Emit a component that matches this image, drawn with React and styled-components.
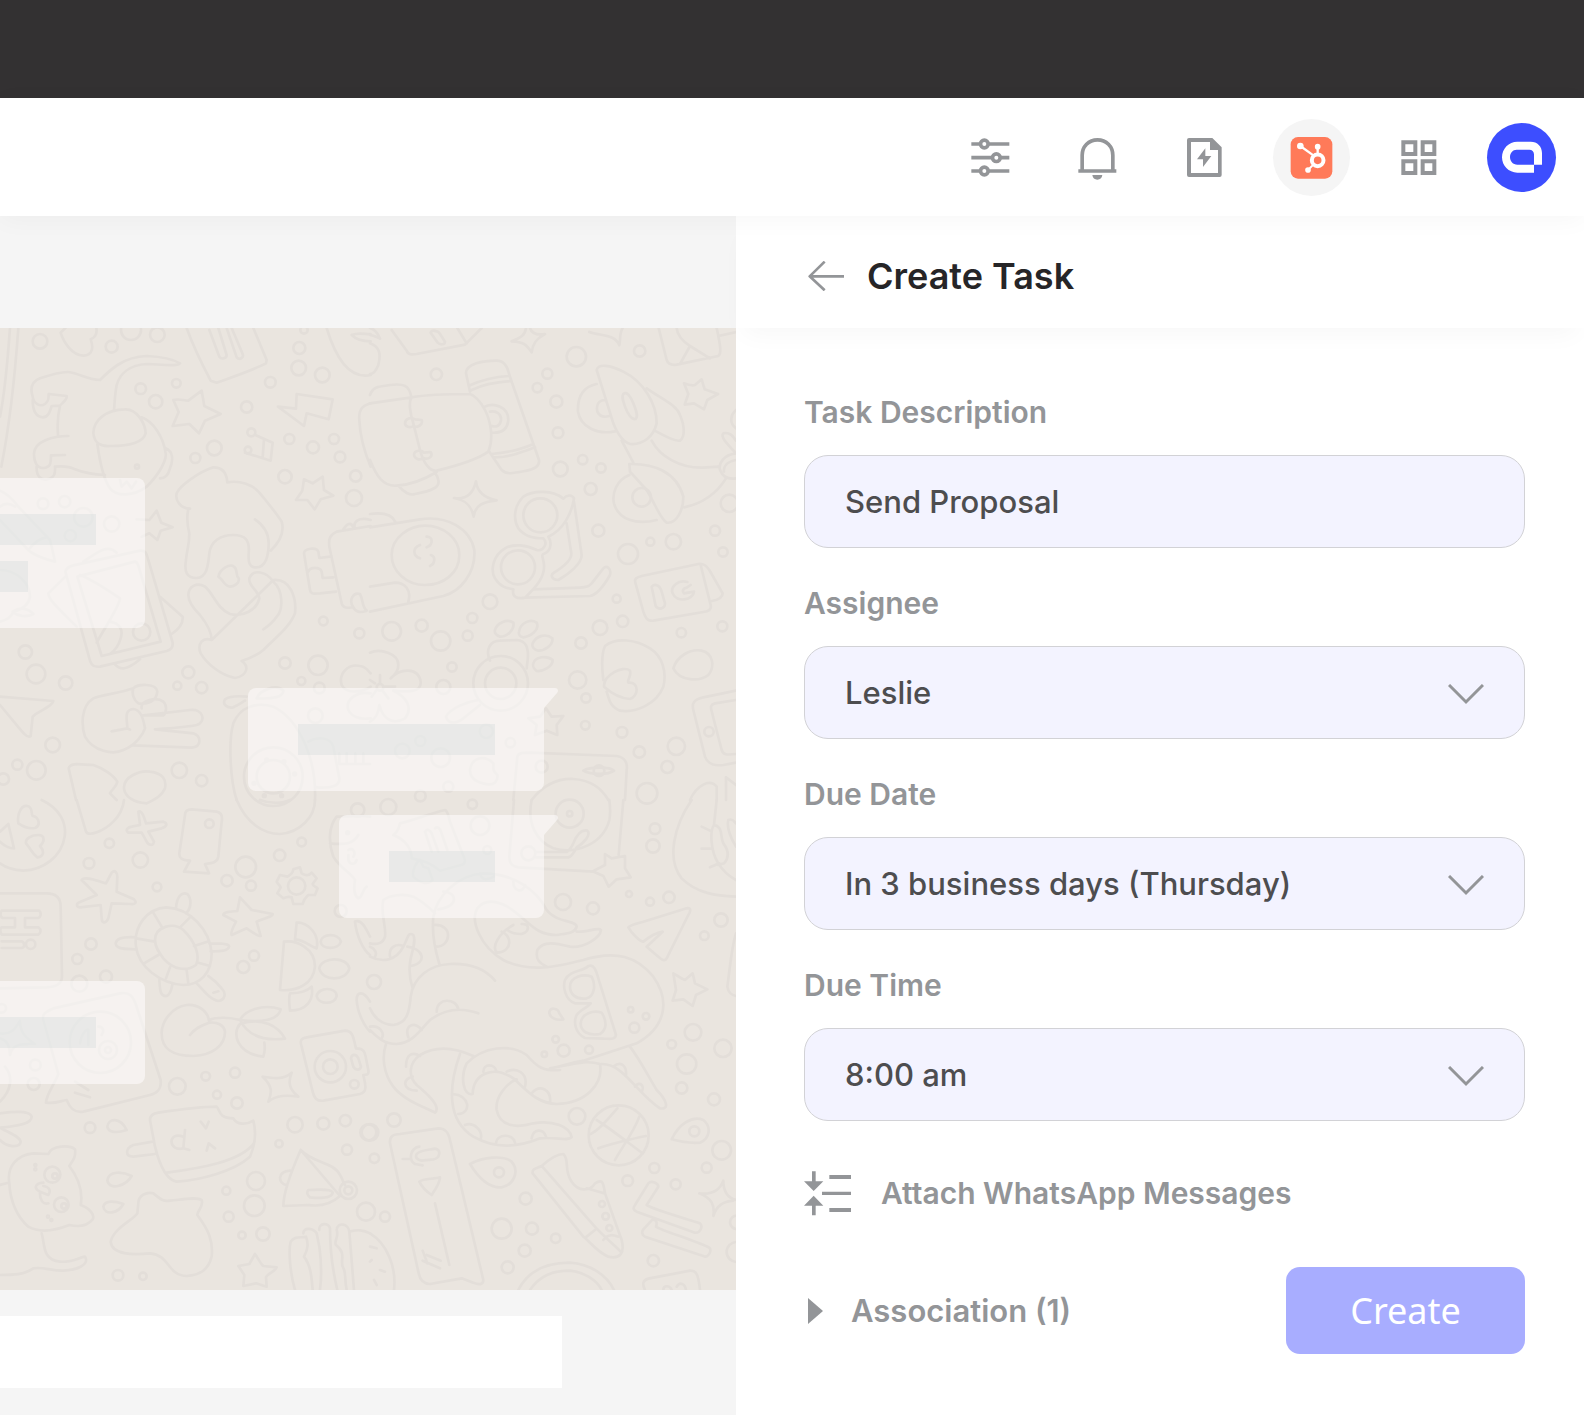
import React from "react";
import styled, { createGlobalStyle } from "styled-components";

const GlobalStyle = createGlobalStyle`
  *, *::before, *::after { box-sizing: border-box; }
  body {
    margin: 0;
    background: #fff;
    font-family: Inter, "Liberation Sans", sans-serif;
  }
`;

const GREY = "#939598";

const Page = styled.div`
  display: flex;
  flex-direction: column;
  min-height: 100vh;
`;

const WindowBar = styled.div`
  height: 98px;
  background: #333132;
`;

const Header = styled.header`
  position: relative;
  z-index: 2;
  display: flex;
  align-items: center;
  justify-content: flex-end;
  gap: 30px;
  height: 118px;
  padding: 0 28px;
  background: #fff;
  box-shadow: 0 4px 24px rgba(0, 0, 0, 0.035);
`;

const IconButton = styled.button`
  display: grid;
  place-items: center;
  width: ${(p) => p.$size || 77}px;
  height: ${(p) => p.$size || 77}px;
  padding: 0;
  border: 0;
  border-radius: 50%;
  background: ${(p) => p.$fill || "transparent"};
  color: ${GREY};
  cursor: pointer;
`;

const Body = styled.div`
  display: flex;
  flex: 1;
`;

const Conversation = styled.main`
  display: flex;
  flex: 1;
  flex-direction: column;
  min-width: 0;
  background: #f5f5f5;
`;

const ConversationHeader = styled.div`
  height: 112px;
`;

const Messages = styled.div`
  position: relative;
  display: flex;
  flex: 1;
  flex-direction: column;
  padding: 150px 192px 0 0;
  overflow: hidden;
  background: #eae5df;
`;

const Wallpaper = styled.svg`
  position: absolute;
  inset: 0;
  width: 100%;
  height: 100%;
  fill: none;
  stroke: #e3ded9;
  stroke-width: 8;
  stroke-linecap: round;
  stroke-linejoin: round;
`;

const Bubble = styled.div`
  position: relative;
  display: flex;
  flex-direction: column;
  align-self: ${(p) => (p.$sent ? "flex-end" : "flex-start")};
  gap: 16px;
  margin-top: ${(p) => p.$gap || 0}px;
  padding: 36px 49px 36px ${(p) => (p.$sent ? 50 : 0)}px;
  border-radius: ${(p) => (p.$sent ? "8px 0 8px 8px" : "0 8px 8px 0")};
  background: rgba(255, 254, 253, 0.55);
`;

const Bar = styled.div`
  width: ${(p) => p.$width}px;
  height: 31px;
  background: rgba(202, 212, 212, 0.28);
`;

const Tail = styled.svg`
  position: absolute;
  top: 0;
  left: 100%;
`;

const Composer = styled.div`
  padding: 26px 174px 27px 0;
`;

const ComposerBox = styled.div`
  height: 72px;
  background: #fff;
`;

const Panel = styled.aside`
  flex: 0 0 848px;
  background: #fff;
`;

const PanelHeader = styled.div`
  display: flex;
  align-items: center;
  gap: 23px;
  height: 112px;
  padding: 8px 59px 0 72px;
  box-shadow: 0 14px 24px -8px rgba(0, 0, 0, 0.035);
`;

const BackButton = styled.button`
  display: flex;
  padding: 0;
  border: 0;
  background: none;
  color: ${GREY};
  cursor: pointer;
`;

const Title = styled.h1`
  margin: 0;
  color: #262527;
  font-size: 36px;
  font-weight: 600;
  line-height: 44px;
`;

const Form = styled.form`
  padding: 64px 59px 60px 68px;
`;

const Field = styled.div`
  margin-bottom: 35px;
`;

const Label = styled.label`
  display: block;
  margin-bottom: 23px;
  color: ${GREY};
  font-size: 30px;
  font-weight: 600;
  line-height: 40px;
`;

const control = `
  display: block;
  width: 100%;
  height: 93px;
  padding: 0 40px;
  border: 1px solid #d2d2d6;
  border-radius: 24px;
  outline: none;
  background: #f3f3ff;
  color: #4d4d4f;
  font: 500 31px/40px Inter, "Liberation Sans", sans-serif;
`;

const TextInput = styled.input`${control}`;

const Select = styled.select`
  ${control}
  appearance: none;
`;

const SelectWrap = styled.div`
  position: relative;
`;

const Chevron = styled.svg`
  position: absolute;
  top: 38px;
  right: 41px;
  pointer-events: none;
`;

const TextButton = styled.button`
  display: flex;
  align-items: center;
  gap: ${(p) => p.$gap}px;
  padding: 0 0 0 ${(p) => p.$indent || 0}px;
  border: 0;
  background: none;
  color: ${GREY};
  font: 600 ${(p) => p.$text || 30}px/45px Inter, "Liberation Sans", sans-serif;
  cursor: pointer;
`;

const AttachRow = styled.div`
  margin-top: 50px;
`;

const Actions = styled.div`
  display: flex;
  align-items: center;
  justify-content: space-between;
  margin-top: 51px;
`;

const CreateButton = styled.button`
  width: 239px;
  height: 87px;
  padding: 0;
  border: 0;
  border-radius: 14px;
  background: #a8adff;
  color: #fff;
  font: 400 36px/48px "Noto Sans", sans-serif;
  cursor: pointer;
`;

const SlidersIcon = () => (
  <svg width="48" height="48" viewBox="80 129 144 144" fill="none" stroke="currentColor" strokeWidth="11">
    <path d="M93 162H118M146 162H207M93 203H154M182 203H207M93 243H118M146 243H207" />
    <circle cx="132" cy="162" r="11.5" />
    <circle cx="168" cy="203" r="11.5" />
    <circle cx="132" cy="243" r="11.5" />
  </svg>
);

const BellIcon = () => (
  <svg width="48" height="48" viewBox="401 129 144 144" fill="none" stroke="currentColor" strokeWidth="11">
    <path d="M425.5 240V196C425.5 169 445 149.500 471.500 149.500S517.500 169 517.500 196V240M414 243H528" />
    <path d="M456 255H486C485 264 479 269 471 269S457 264 456 255Z" fill="currentColor" stroke="none" />
  </svg>
);

const NoteIcon = () => (
  <svg width="48" height="48" viewBox="723 129 144 144" fill="currentColor">
    <path fillRule="evenodd" d="M747 144H817L845 172V255Q845 261 839 261H747Q741 261 741 255V150Q741 144 747 144ZM753 156V249H834V180H810V156Z" />
    <path d="M796 175L771 208H789V231L814 198H796Z" />
  </svg>
);

const HubIcon = () => (
  <svg width="48" height="48" viewBox="84 129 144 144">
    <rect x="92" y="141" width="125" height="125" rx="22" fill="#ff7a59" />
    <g fill="#fff">
      <circle cx="121" cy="168" r="10" />
      <circle cx="173" cy="170" r="8.500" />
      <circle cx="144" cy="240" r="8.500" />
    </g>
    <g fill="none" stroke="#fff">
      <circle cx="173" cy="211" r="17.500" strokeWidth="12" />
      <path d="M121 168L160 196M173 170V194" strokeWidth="7" />
      <path d="M144 240L160 224" strokeWidth="6" />
    </g>
  </svg>
);

const GridIcon = () => (
  <svg width="48" height="48" viewBox="404 129 144 144" fill="none" stroke="currentColor" strokeWidth="12">
    <path d="M429 157H465V192H429ZM487 157H522V192H487ZM429 214H465V249H429ZM487 214H522V249H487Z" />
  </svg>
);

const AvatarMark = () => (
  <svg width="48" height="48" viewBox="714 130 144 144" fill="#fff">
    <path fillRule="evenodd" d="M822 249H772C746 249 726 228 726 203C726 177 746 156 772 156H812C832 156 846 170 846 190V225H822ZM770 180C758 180 750 190 750 202C750 215 759 225 772 225H822V194C822 186 816 180 808 180Z" />
  </svg>
);

const BackIcon = () => (
  <svg width="36" height="30" viewBox="236 153 108 90" fill="none" stroke="currentColor" strokeWidth="8">
    <path d="M344 199H241M286 155L241 199L286 241" strokeLinejoin="round" />
  </svg>
);

const AttachIcon = () => (
  <svg width="48" height="45" viewBox="42 93 144 135" fill="currentColor">
    <path d="M66 94H77V124H100L71 153L42 124H66ZM66 226H77V197H100L71 167L42 197H66Z" />
    <path d="M118 105H183V117H118ZM96 155H183V165H96ZM118 204H183V216H118Z" />
  </svg>
);

const DisclosureIcon = () => (
  <svg width="15" height="26" viewBox="0 0 15 26" fill="currentColor">
    <path d="M0 0L15 13L0 26Z" />
  </svg>
);

/* Wallpaper doodles, one tile per quarter, drawn on a grid three times finer than the page. */
const TILES = [
  {
    x: 0,
    y: -8,
    dots: [[120,64,22],[335,80,18],[393,30,30],[472,44,22],[422,206,16],[467,245,20],[529,190,13],[643,384,22],[586,414,15],[811,187,16],[898,84,18],[896,144,22],[967,165,22],[740,261,17],[868,357,15],[1002,357,15],[939,382,18],[1020,411,16],[855,470,20],[1067,468,17],[1062,534,24],[912,30,11],[129,551,16],[194,545,17],[250,592,28],[335,612,23],[211,647,17],[425,936,26],[76,996,20],[108,1062,28],[197,1089,20],[158,1275,22],[52,1334,15],[109,1351,28],[10,1377,17],[565,1057,18],[532,1097,12],[605,1103,17],[855,1029,17],[954,1036,29],[904,1083,12],[958,1104,16],[970,903,13],[1078,940,15],[946,1187,22],[538,1351,23],[605,1382,17],[411,440,6],[754,337,12],[744,390,10],[820,1370,88],[820,1370,50],[800,1320,4],[852,1325,4],[884,1362,4],[762,1390,4],[793,1427,4],[845,1427,4]],
    paths: [
      "M55 24C44 180 26 330 4 440M30 24C24 100 18 200 0 290",
      "M182 38C190 65 215 105 250 107C280 106 280 80 272 58C290 50 292 35 288 20M182 38L200 20",
      "M98 230C90 205 95 185 120 175C150 165 180 155 205 156C240 160 260 180 300 180C330 150 370 110 440 108C480 110 520 118 540 130C530 140 500 134 440 132C390 135 360 160 350 195C345 220 344 245 342 272",
      "M98 230C100 250 120 262 135 252C148 242 145 235 146 222L200 228C202 240 185 250 180 257L155 258C150 275 145 292 128 292C108 290 98 275 98 240M180 257C172 290 172 320 174 345M205 348C160 348 105 362 102 400C102 425 110 445 130 444C155 442 152 425 153 406L195 405M110 440C108 470 125 482 142 478C165 472 166 460 165 440C190 438 210 440 225 448C260 462 290 464 315 465",
      "M280 340C280 300 320 268 375 268C410 266 436 310 437 340C430 365 390 378 330 378C300 380 284 370 280 340ZM292 372C300 430 312 480 330 505C350 530 400 530 440 500C480 460 500 420 497 400C490 350 460 305 425 292M497 385C520 395 520 420 510 445C505 465 495 475 480 475M360 480L365 500L380 485L395 505L408 485",
      "M520 240C540 235 550 242 565 242L605 212L613 258L662 282L615 302L597 340L568 312L518 318L536 276Z",
      "M560 24C580 80 610 140 632 182L650 188C700 170 760 150 798 130L800 120L760 24M628 30L658 110C665 120 680 115 680 105L655 24M680 24L710 112C720 122 732 112 728 102L695 24",
      "M890 222L998 238L986 298L920 280L912 318L834 260L888 266Z",
      "M766 345L818 368L812 422L735 398M792 358L788 412",
      "M912 478L938 490L968 470L972 510L1000 527L962 538L944 568L922 540L888 540L907 512Z",
      "M980 24C1000 90 1040 180 1112 165M1055 45C1080 35 1100 45 1112 42M1055 45C1070 60 1090 64 1112 64",
      "M570 566C540 565 525 540 530 520C540 495 600 455 640 442C665 442 680 455 682 487C720 480 760 495 780 520C800 545 830 580 845 605C855 640 835 670 812 692M765 598C790 615 806 640 806 670C806 700 800 745 765 742C745 740 745 720 746 700C750 660 735 645 700 645C660 645 632 665 628 700C624 740 620 772 590 774C560 774 552 755 558 720C560 690 568 680 568 640C560 610 560 590 565 566",
      "M655 770C660 745 690 730 702 740C715 750 705 765 716 775C720 790 700 800 690 800C675 800 670 780 655 770Z",
      "M635 960C635 940 620 910 600 885C580 865 565 845 565 825C565 800 590 785 615 800C640 820 650 865 690 882C730 892 770 870 778 835C775 810 745 800 748 775C760 745 800 755 820 785C850 810 850 870 830 890C820 905 805 918 790 928M820 780C870 775 890 830 885 880C870 920 830 950 790 990C770 1008 750 1015 725 1023C750 1040 740 1068 705 1074C660 1065 620 1030 602 1000C590 970 610 950 635 960Z",
      "M410 598L448 600L470 572L484 608L518 622L482 632L472 660L448 640L425 650",
      "M196 755C200 742 210 738 220 736L420 692C440 690 440 705 445 720L518 968C520 985 510 990 500 993L300 1040C280 1042 275 1035 270 1022ZM232 770L405 725C412 726 414 734 416 740L482 965L305 1008ZM240 765C280 780 330 815 360 835C358 860 310 930 290 968M196 770L145 820C145 840 180 870 230 920M250 725C290 700 320 670 350 698M480 830L548 890C550 910 540 925 515 942M345 1033C360 1050 380 1052 420 1018M330 905C360 910 370 930 362 955C355 980 340 995 330 1002",
      "M0 512C20 520 40 540 55 560L150 660C155 680 160 700 165 725C140 720 100 705 85 690L0 600M85 690C100 670 115 655 140 652M0 560C15 548 30 550 45 560M0 750C50 750 90 790 90 830C85 860 60 870 40 875C35 890 20 900 0 905M38 875C60 860 85 865 100 882C80 892 55 890 38 875Z",
      "M0 1130L160 1143C158 1160 110 1175 98 1190L92 1248C80 1260 60 1225 0 1155",
      "M400 1105C360 1120 300 1125 280 1135C240 1160 245 1220 255 1250C280 1295 340 1305 370 1290C410 1275 430 1240 435 1225C430 1200 425 1170 400 1167C370 1170 382 1200 382 1225L335 1234M382 1225L390 1229M400 1105C410 1092 470 1088 472 1115C470 1145 440 1155 415 1150C400 1140 395 1120 400 1105ZM425 1165C420 1140 470 1130 490 1145C505 1160 495 1185 490 1186L430 1186M430 1186L570 1170C610 1165 620 1205 590 1215C560 1222 500 1225 465 1228L580 1240C605 1250 605 1280 575 1283L400 1276",
      "M228 1440L206 1345C210 1325 250 1335 280 1335C310 1345 340 1365 352 1385C350 1400 335 1408 330 1420L350 1440M372 1405C370 1370 420 1350 450 1355C490 1360 500 1380 495 1405C485 1430 460 1440 440 1450C400 1448 375 1430 372 1405Z",
      "M740 1130C720 1128 690 1128 675 1138C665 1155 685 1165 700 1162C715 1155 725 1148 735 1142M770 1135C780 1110 830 1090 850 1112C850 1130 820 1138 770 1135ZM710 1440C690 1380 685 1260 700 1210C720 1160 770 1145 820 1160C900 1200 950 1320 945 1440",
      "M1112 1100C1090 1115 1040 1125 1025 1095C1015 1060 1045 1030 1080 1038C1100 1040 1105 1055 1112 1060M1112 1120C1070 1112 1035 1140 1045 1170C1055 1190 1080 1200 1112 1195",
      "M1112 600C1075 590 1060 605 1064 622M1030 628C1045 605 1055 610 1060 622M988 680C985 655 990 645 1010 635L1112 618M988 680L1025 850C1030 870 1050 862 1058 862M912 700C912 685 950 680 955 695L958 714L990 710M912 700L930 810C932 825 945 820 960 820L1008 815M925 755C930 740 960 740 965 755L968 774L1000 772M1060 862C1045 840 1060 815 1080 822C1090 840 1085 860 1100 872C1080 880 1065 875 1060 862M1078 300C1075 270 1085 258 1112 250M1078 300C1080 350 1095 400 1112 440",
      "M925 1265C950 1250 990 1250 1000 1280L1018 1375C1020 1400 990 1405 950 1402M1018 1300V1332H1110M1040 1300V1330M1066 1300V1330M1090 1300V1330",
    ],
  },
  {
    x: 370,
    y: -8,
    dots: [[619,110,29],[809,93,17],[199,163,17],[532,161,15],[502,203,14],[559,245,18],[564,338,16],[571,447,22],[638,419,14],[693,444,14],[662,507,18],[685,632,18],[774,702,30],[841,665,12],[910,665,23],[1035,632,15],[1059,696,14],[1078,550,26],[740,836,12],[758,904,17],[934,938,14],[1057,919,15],[690,923,22],[360,845,22],[307,894,15],[293,947,15],[155,917,18],[65,934,28],[212,963,29],[246,1041,14],[220,1101,21],[633,969,17],[623,1080,26],[648,1134,14],[646,1216,13],[756,1237,16],[808,1296,17],[919,1279,26],[892,1341,18],[831,1420,31],[1017,1235,14],[349,1234,20],[151,1263,15],[97,1293,22],[212,1313,28],[421,1268,14],[515,1340,18],[235,1400,15],[151,1428,16],[511,586,51],[444,742,51],[392,1090,82],[392,1090,47],[815,532,28],[687,1352,16],[30,1102,10]],
    paths: [
      "M65 30L110 92C115 105 125 104 140 102L285 74L335 24M262 24L290 70M182 38C185 28 205 32 210 42L225 65C225 75 210 75 203 68Z",
      "M425 64C455 52 465 45 468 24M425 64C460 65 470 75 485 97C488 70 500 55 525 42C500 46 485 40 480 24M658 36C690 48 735 42 748 76C752 55 748 40 758 24",
      "M0 70C25 80 35 95 25 135C15 160 5 162 0 162M0 24C20 30 25 45 30 56C20 50 10 48 0 44",
      "M866 24L890 120C895 134 905 136 920 134L1045 108C1055 100 1052 80 1040 24M920 24C922 50 940 65 960 78L1020 115M960 78L930 132M1045 48L1100 36",
      "M0 225C8 202 20 200 60 195C100 190 118 195 124 232M0 250L125 232M125 232C115 245 120 280 130 310L150 390C160 430 180 455 200 452C250 440 320 420 355 395C370 360 365 310 345 270C330 240 310 225 300 222C240 222 180 222 125 232M0 420C20 470 40 500 80 497C120 495 160 480 200 456M88 500C100 515 120 528 135 522C190 512 210 500 205 480C203 470 200 465 196 460",
      "M105 310C105 295 125 290 135 298L155 300C160 315 140 325 130 318C120 325 105 320 105 310ZM132 405C132 390 155 388 162 398L182 396C190 410 175 420 160 414C150 422 135 418 132 405Z",
      "M300 215L288 160C288 130 340 122 380 122C400 122 412 135 418 165L507 420C510 440 490 448 470 452C430 460 410 465 395 450L358 395M300 196C335 180 380 170 415 168M305 210C340 192 390 185 422 183M365 402C410 398 450 390 490 372M372 412C420 412 460 395 495 382M340 262C370 245 415 260 415 300C412 330 395 340 366 338M360 275C380 270 395 285 393 300C390 318 380 322 365 318",
      "M252 534C290 540 310 520 318 484C322 520 350 535 380 541C340 545 315 555 311 590C305 560 290 540 252 534Z",
      "M680 150C685 130 720 135 760 155C820 185 860 250 860 310C850 350 820 375 780 372C755 365 740 335 730 310ZM760 222C770 212 782 230 790 250C800 275 805 290 797 297C785 300 772 280 765 260C758 240 755 230 760 222ZM680 192C640 200 622 230 624 275C632 320 680 345 735 334M706 240C685 240 678 255 682 275C690 292 705 292 718 288M830 205C880 240 920 255 930 285C945 320 945 350 930 362C910 365 880 345 858 334M755 362L790 428M845 362C870 410 930 445 1000 443L1045 440M778 432C850 430 920 455 940 530C940 570 920 612 890 608C870 595 860 560 830 510L780 455ZM778 465C740 480 725 520 732 550C745 600 800 615 860 600M942 562C1000 550 1040 520 1068 475M1098 400C1070 370 1050 350 1060 340C1080 335 1090 350 1098 362M1098 400C1060 405 1045 430 1050 450C1060 475 1080 478 1098 475M1098 420C1070 425 1060 440 1062 455M1098 270C1080 285 1078 310 1098 325",
      "M942 190C955 195 965 198 975 195L995 178L1004 208L1044 222L1012 240L1002 268L972 250L944 254L955 222Z",
      "M580 536C550 510 490 510 460 530C430 560 430 600 445 625C465 650 490 655 520 655C535 670 520 695 500 690C470 675 430 670 405 685C370 705 360 750 375 775C390 800 410 805 430 808C425 830 440 838 465 833L660 828C680 825 700 800 720 765C725 745 710 735 700 745L665 790C655 800 650 802 630 803L490 808M465 833C500 800 525 770 522 735C520 710 510 705 525 700C545 690 545 665 535 650C580 630 605 580 612 535C605 522 590 525 580 536M612 545L635 705C635 730 600 760 565 780C545 780 540 765 552 758C590 735 605 715 604 700L590 610",
      "M0 582C30 578 65 580 76 606M0 622L150 598C230 585 300 625 313 690C318 760 270 815 220 828L0 875M0 800L75 788C105 788 125 810 115 845M65 705C65 650 120 617 165 617C220 617 268 655 268 705C268 760 220 795 165 795C110 795 65 755 65 705ZM170 650C190 650 190 675 170 682M150 675C125 685 130 708 150 715M183 705C198 710 195 732 180 738",
      "M798 795C790 775 800 772 815 768L985 732C1000 730 1008 735 1018 750L1058 820C1058 832 1045 840 1025 843M992 735L1022 855C1025 870 1015 874 1000 876L850 902C830 904 825 890 820 875L798 795M845 800C855 790 870 795 875 815L885 850C885 868 865 870 857 858ZM952 786C925 778 900 800 908 820C920 850 970 840 972 815L942 820C935 812 940 805 950 803L962 795",
      "M375 930C380 910 410 895 430 908C435 930 410 950 390 950C378 945 372 940 375 930ZM447 935C450 910 480 895 500 908C510 930 480 950 460 952C450 950 445 945 447 935ZM488 970C500 945 530 940 547 955C550 975 525 992 505 992C490 988 485 980 488 970ZM490 1030C495 1010 530 1005 548 1020C548 1040 520 1055 500 1053C490 1045 487 1040 490 1030ZM360 1022C345 990 360 962 390 962L440 960C470 962 474 985 474 1010L470 1045M325 1140C290 1145 240 1165 228 1190C235 1215 260 1210 280 1195L330 1155",
      "M0 998C30 985 85 1000 85 1035C85 1055 75 1065 62 1075C90 1045 145 1040 152 1085C155 1120 110 1115 70 1112C110 1130 130 1165 105 1195C70 1215 40 1200 28 1155C25 1190 10 1200 0 1205M30 1065V1090M45 1100H75M40 1115L55 1135M18 1112L5 1130M15 1090L0 1080",
      "M700 1080C695 1040 695 1000 705 978C740 950 800 960 840 985C880 1010 890 1060 880 1100C860 1150 800 1180 750 1172C720 1160 718 1140 710 1115M702 1100C700 1065 760 1035 780 1052C785 1070 770 1080 775 1088C810 1085 805 1130 780 1137C750 1135 725 1120 702 1100ZM910 1045C920 1010 960 985 995 992C1030 1000 1035 1040 1015 1065C990 1085 930 1085 910 1045Z",
      "M1098 1112L1000 1132C970 1140 965 1150 970 1170L1005 1310C1015 1335 1035 1338 1060 1335L1098 1328M1098 1140L1035 1150C1022 1153 1022 1162 1024 1170L1055 1290C1060 1305 1070 1305 1098 1302",
      "M475 1195L510 1190L528 1165L545 1190L580 1188L560 1215L562 1245L530 1232L495 1245L500 1215Z",
      "M430 1440L442 1310C445 1298 460 1298 480 1298L740 1308C765 1312 773 1330 770 1350L765 1440M640 1352C660 1340 720 1340 732 1352C715 1365 660 1365 640 1352ZM485 1440C520 1395 560 1375 610 1377C660 1380 695 1405 715 1440",
      "M300 1350C305 1310 345 1305 370 1330C372 1345 365 1350 382 1365C385 1385 370 1395 355 1393C330 1390 300 1380 300 1350ZM960 1440C980 1395 1020 1375 1040 1400V1440M1068 1372L1098 1395M1068 1372V1440",
    ],
  },
  {
    x: 0,
    y: 472,
    dots: [[328,130,14],[267,190,16],[421,180,23],[471,261,13],[737,201,31],[681,242,17],[753,257,15],[839,166,17],[905,126,13],[1073,30,20],[628,71,13],[273,432,17],[232,477,15],[318,530,18],[238,551,24],[762,467,15],[730,501,18],[106,795,16],[101,852,18],[532,859,25],[617,829,13],[705,818,15],[651,884,12],[711,909,17],[270,983,16],[885,974,23],[970,971,18],[1036,962,17],[837,1031,11],[1041,1049,15],[768,1143,27],[763,1217,31],[679,1172,12],[686,1250,15],[1098,1235,27],[726,1306,11],[789,1302,20],[354,1426,16],[429,1429,11],[1022,333,18],[1105,997,24],[5,625,13],[890,258,26],[92,433,14],[991,800,47],[991,800,22],[1063,853,13],[1045,1171,26],[1045,1171,12],[157,1124,24],[184,1214,22],[165,1128,8],[192,1218,8],[301,727,92],[324,750,27],[324,750,9],[106,1095,3],[106,1108,3],[144,1250,3],[154,1260,3],[1043,98,4]],
    paths: [
      "M125 0C180 25 200 70 194 110C185 170 130 210 70 212C40 210 20 205 0 190M55 70C50 40 65 15 82 18C100 22 92 40 98 48C115 50 125 75 105 84C85 88 70 80 55 70ZM78 130C75 115 95 105 115 105C135 105 135 125 120 138C135 155 130 170 112 172C95 160 95 150 78 130ZM25 72L42 145C25 145 10 135 0 125M25 72L0 95",
      "M230 0L258 95C265 110 310 95 340 65C360 45 370 20 372 0",
      "M415 35C425 30 432 50 438 70L490 65C505 70 500 80 485 85L445 95L462 125C460 140 445 135 440 125L425 98L385 98C375 90 382 82 395 80L420 75Z",
      "M555 45C555 32 562 28 575 28L650 35C665 38 668 50 665 65L655 170C652 190 630 190 615 192L627 220L552 215L570 182C545 180 537 175 538 160Z",
      "M710 0C740 70 790 102 840 102C900 98 945 50 945 0M780 0C810 12 850 10 870 0",
      "M245 240C250 228 280 238 318 250L335 218C345 208 352 218 352 230L350 275L402 298C412 308 405 314 392 312L335 310L325 355C318 372 305 370 305 355L302 315L240 322C228 320 228 310 240 306L290 285Z",
      "M880 208L900 202L905 220C915 225 925 230 935 218L950 235L938 252C940 260 948 260 953 265L945 285L925 285C918 292 912 295 908 312L880 312L875 292C865 288 860 290 850 295L832 280L842 262C840 255 832 252 830 245L840 225L862 230C870 225 878 222 880 208Z",
      "M0 280H140C165 280 182 290 182 320L186 530C185 555 165 560 140 562L0 565M5 332H118C125 340 122 352 115 354H75V382H115C125 390 122 400 115 404H5C0 395 0 386 5 382H45V354H8C0 350 0 340 5 332ZM5 424H65C75 428 75 442 65 444H5",
      "M408 440C400 380 440 325 500 322C570 325 630 390 635 460C635 520 600 555 550 555C480 550 415 500 408 440ZM465 420C465 380 520 365 550 390C590 430 600 470 588 495C560 515 520 510 490 475C475 455 465 440 465 420ZM458 335L485 380M570 352L540 382M622 425L582 438M630 498L595 488M565 550L560 512M498 535L510 502M432 490L475 465M408 415L465 425M528 325C530 290 545 275 562 282C575 295 575 325 558 340M408 412C380 410 350 412 347 430C350 450 380 446 408 448M628 430C655 430 690 430 687 440C685 455 655 454 632 454M478 540C480 570 480 590 500 588C515 580 515 560 518 550M588 548C610 570 630 600 655 603C675 600 680 580 665 565C650 545 635 535 625 528M640 578L655 574",
      "M720 292L755 330L818 342C820 350 790 355 770 365L782 408C775 410 755 395 740 385L695 405C690 398 700 380 708 365L670 345C670 335 690 335 712 333Z",
      "M890 368C915 365 960 395 950 445C930 440 915 420 885 418ZM852 425C890 420 945 445 945 500C940 550 895 575 840 570ZM935 560C942 600 920 632 870 632C868 610 865 595 870 580C895 580 920 575 935 560ZM962 425C965 400 1015 398 1023 425C1015 450 965 450 962 425ZM958 505C965 470 1040 468 1048 505C1040 545 965 545 958 505ZM950 588C955 560 1010 560 1010 588C1005 615 955 615 950 588ZM1065 365C1085 355 1100 390 1110 410M1065 365C1070 410 1090 450 1110 465M1110 605C1090 570 1070 575 1070 600C1072 640 1095 680 1110 695",
      "M570 705C590 680 610 675 628 668C625 630 590 612 560 615C520 620 485 660 485 700C485 750 520 768 580 768C640 765 675 735 675 695C672 675 650 665 628 668M628 660C650 650 690 652 720 660C735 630 790 610 842 628C835 660 790 668 720 660C740 700 780 725 855 716C835 680 790 650 720 672C695 700 710 760 790 770C795 755 795 740 793 728",
      "M905 740C898 720 905 715 920 712L1035 692C1060 692 1060 715 1068 745C1095 745 1095 760 1100 785L1105 810C1108 825 1098 825 1090 825C1095 850 1105 875 1080 882L970 902C950 904 943 895 938 875ZM1053 775C1055 762 1068 760 1075 775L1083 800C1080 812 1068 812 1060 800Z",
      "M0 940C40 935 90 930 95 950C95 970 60 978 0 983C30 1000 60 1010 62 1025C60 1045 20 1042 0 1020M130 660C125 640 140 635 160 625L360 580C390 575 400 590 408 615L482 840C485 870 470 880 450 885L250 935C220 940 208 920 200 900C185 902 165 912 138 908C138 885 165 850 175 822ZM225 845L265 870M225 878L270 892M295 680C312 680 312 695 305 705M240 730C245 700 260 685 265 690V735",
      "M322 980C325 955 360 950 380 990C350 1000 325 998 322 980ZM322 1142C325 1110 370 1115 395 1128C380 1155 330 1175 322 1142ZM310 1220C315 1198 350 1205 370 1212C355 1240 315 1248 310 1220Z",
      "M450 960C450 945 460 940 475 938C530 930 600 920 650 920C660 930 655 955 700 955C710 975 740 975 760 962C770 1000 765 1035 750 1070C700 1115 600 1140 530 1145C500 1140 480 1100 465 1040ZM500 1118C600 1105 720 1085 762 1030M458 1025L400 1035C375 1045 375 1070 400 1070L465 1062M555 990L550 1045C530 1050 512 1040 515 1020C520 1005 535 1005 550 1010M550 1045L568 1050M602 965L618 985L626 965M620 1052L626 1030L645 1045",
      "M28 1150C20 1100 50 1065 100 1060L145 1062C155 1035 210 1035 225 1048C228 1070 220 1080 208 1098C240 1140 248 1180 242 1215C270 1225 285 1245 278 1258C260 1280 230 1280 208 1275C170 1290 120 1300 85 1280C50 1250 30 1200 28 1150ZM130 1148C105 1150 100 1165 120 1175C118 1200 130 1215 145 1210M120 1175L145 1185C155 1170 145 1160 130 1158M125 1300C135 1330 125 1380 180 1385C220 1388 240 1370 255 1370C270 1395 230 1410 190 1412C150 1412 130 1400 100 1405C70 1425 40 1425 0 1425M0 1155L25 1148",
      "M415 1210C415 1185 440 1175 460 1180C480 1195 485 1205 510 1202C550 1198 590 1190 605 1200C612 1220 590 1235 592 1245C625 1290 640 1320 635 1370C625 1410 600 1425 560 1428C500 1425 510 1365 450 1360C400 1365 335 1365 332 1325C340 1285 400 1260 412 1240Z",
      "M788 830C820 835 850 840 875 818C862 850 870 870 895 890C860 885 830 885 805 905C815 880 820 860 788 830Z",
      "M902 1050C940 1090 1000 1085 1020 1125C1030 1140 1030 1150 1035 1155M1020 1188C990 1215 960 1220 925 1215L850 1218C850 1170 880 1100 902 1050ZM870 1112C830 1115 835 1150 858 1155M925 1170C950 1170 995 1165 998 1178C995 1195 960 1195 930 1192C920 1185 920 1175 925 1170Z",
      "M765 1362C775 1375 780 1390 790 1398L830 1402C825 1415 800 1422 798 1432L800 1460L768 1450L730 1458L733 1425L715 1398L748 1392Z",
      "M885 1470C870 1420 865 1350 872 1325C885 1305 905 1315 918 1310C925 1330 925 1345 912 1370C935 1400 935 1440 938 1470M910 1300C910 1280 940 1285 950 1300L958 1340C965 1390 965 1430 960 1470M958 1290C955 1270 985 1265 990 1285C990 1350 1000 1420 1012 1470M1010 1290C1012 1265 1045 1270 1048 1295L1062 1470M1010 1290C1018 1310 1000 1325 1008 1335C1040 1360 1020 1380 1028 1400C1040 1420 1032 1430 1040 1470M1048 1295C1075 1288 1090 1290 1110 1300",
      "M1110 50C1090 45 1030 50 1010 50C985 80 985 130 1000 170C1020 205 1050 215 1065 240C1060 270 1065 290 1075 295C1090 290 1085 270 1100 260M990 130C1040 135 1060 130 1075 105M1045 150C1060 140 1068 160 1060 170M1045 165V180C1050 195 1065 195 1070 180",
      "M0 700C30 705 45 690 60 662C60 700 80 715 105 732C60 730 35 735 30 765C30 740 20 720 0 715M15 800C40 830 35 870 0 905",
    ],
  },
  {
    x: 370,
    y: 472,
    dots: [[55,21,24],[307,13,14],[330,77,28],[352,150,12],[855,86,16],[849,138,20],[777,282,9],[840,305,12],[897,292,17],[579,306,24],[669,325,18],[1053,360,20],[1003,407,13],[12,546,21],[969,697,25],[1059,745,26],[905,733,13],[950,792,29],[935,864,17],[1032,898,18],[621,949,25],[72,960,20],[0,997,25],[13,1075,14],[1055,1051,28],[1010,1103,15],[853,1104,15],[773,1142,16],[917,1153,15],[467,1196,18],[395,1286,30],[486,1286,18],[557,1315,14],[464,1352,18],[413,1402,18],[850,1382,17],[45,1250,15],[1100,1267,20],[1100,1356,30],[599,41,42],[599,41,8],[475,160,21],[746,1006,90],[387,1117,15],[973,994,15],[782,629,8],[828,649,10],[793,683,15],[657,749,12],[581,752,18],[557,718,10],[523,763,8],[696,1212,9],[707,1249,10],[718,1284,9]],
    paths: [
      "M485 0C470 70 500 125 550 145C620 165 700 130 718 60C722 40 720 15 718 0M432 0L418 170C418 190 425 198 445 202L670 215M760 0L746 165M496 156H590C600 150 605 140 610 130C620 105 635 88 652 92C665 105 640 130 620 142C612 158 605 170 595 172H498",
      "M705 162L725 175L765 168V205L782 232L740 238L716 260L700 228L668 214L705 195Z",
      "M965 0C910 80 890 180 935 235C980 280 1040 288 1098 290M1040 0L1032 75C1060 80 1050 110 1060 130C1075 150 1080 170 1062 190L1045 195M1032 75C1020 90 1020 150 1045 190C1060 215 1080 230 1098 240M995 80L1020 92M995 146H1022M1020 202L1048 190M1098 140C1080 110 1070 80 1075 60C1085 55 1092 62 1098 70",
      "M775 382C780 375 795 372 820 365L950 325C965 322 962 335 955 345L890 475C885 485 875 480 865 470L830 440L878 395C860 398 845 405 820 425C810 425 785 400 775 382Z",
      "M910 520C920 525 930 535 945 540L968 520L975 550L1012 568L978 585L968 618L940 598L908 602L918 570Z",
      "M1098 400C1085 440 1080 500 1072 560C1075 580 1085 585 1098 588",
      "M90 70C120 65 180 40 225 30C235 35 235 50 240 65L285 180C285 190 280 195 270 196L210 212C185 190 160 180 125 175C125 150 110 120 70 105C85 95 85 85 90 70ZM165 95C172 85 180 90 185 100L205 155M195 85C202 78 210 85 213 95L232 150M165 95L185 155",
      "M130 230C125 210 140 185 150 180L160 200L175 205L188 240C175 255 150 250 130 230Z",
      "M208 492C195 450 185 400 190 350C200 290 260 225 340 220C430 220 500 270 530 330C560 370 620 360 620 380C615 400 590 400 560 405C500 405 480 370 440 340C400 305 350 290 322 325C300 360 330 440 400 480C480 520 560 500 640 480C740 450 800 470 850 530C900 600 890 680 800 730L640 782C590 790 580 800 540 805C620 790 650 780 690 792C700 850 650 910 560 912C500 910 470 870 430 835C370 795 310 820 308 882C280 890 270 830 290 790C340 740 420 730 470 765C500 800 520 815 570 810",
      "M620 395C650 398 685 380 693 390C690 415 640 445 600 440C560 430 520 420 502 450C495 480 510 490 530 500M455 372C480 370 480 395 455 402C440 402 420 398 410 388M395 395C425 405 430 455 380 458C365 440 385 400 430 375",
      "M40 300C60 285 100 280 130 290C160 305 180 325 195 340M40 300C30 340 50 380 45 410C40 430 20 435 0 430M0 470C40 490 80 480 100 440C115 410 115 395 130 405C145 440 100 480 128 565M112 440C160 445 175 490 120 498M60 470C55 440 80 430 100 438M0 440C15 445 22 460 15 470M220 275C260 275 270 320 205 328M190 375C250 370 245 440 198 440M430 245C430 275 460 280 465 255M330 220C335 240 350 242 372 230",
      "M375 542C340 500 290 490 240 492C180 495 130 530 122 590C118 640 110 670 70 675C35 675 10 650 0 625M325 640C270 620 220 630 180 660C150 690 130 728 80 732C40 732 20 710 0 690M200 635C200 590 260 595 265 628M115 712C100 670 140 665 155 690M0 680C30 675 45 700 35 715",
      "M48 732C35 770 40 820 70 860C100 900 160 920 195 938C215 920 170 880 140 855C115 830 115 790 150 765C200 735 260 745 310 768M108 800C108 760 130 755 150 768M128 830C98 835 95 870 140 872M270 762C235 860 230 960 310 1010C380 1050 450 1040 510 1015C560 1010 590 1025 605 1012C600 980 550 960 490 970C440 985 390 980 380 930C375 890 410 850 440 838M248 882C300 885 305 940 265 942M285 975C310 965 340 990 332 1018M378 1030C380 1000 430 1000 435 1028M485 1015C490 985 520 985 528 1010M340 815C340 790 375 790 380 815M410 815C440 800 475 820 465 860M485 880C510 850 545 870 540 908M695 792C760 790 800 880 870 925C900 930 890 900 860 870C830 820 810 780 780 740M730 800C755 780 770 800 768 825M795 860C810 840 825 860 815 875",
      "M655 498C675 490 680 520 685 535L738 705C735 720 720 716 700 716L645 714C615 700 610 665 620 645C630 630 650 625 662 610H615C585 600 578 560 585 540C600 510 640 515 655 498ZM600 560C600 530 640 520 665 530C680 560 670 590 650 595C615 600 600 580 600 560ZM632 670C635 640 670 630 695 638C712 665 710 690 690 702C655 708 632 695 632 670ZM538 640C538 618 565 625 568 640L580 658C560 662 542 655 538 640Z",
      "M680 960C720 985 790 1040 818 1060M742 925C715 955 690 990 662 1002M808 950C790 1000 750 1050 735 1080M828 1008C790 1015 710 1035 685 1045",
      "M905 1018C925 975 965 945 1000 960C1025 980 1020 1015 990 1028C960 1030 930 1025 905 1018ZM300 1092C340 1070 400 1065 425 1085C450 1115 430 1155 395 1162C350 1165 320 1125 300 1092Z",
      "M60 1030C58 1008 70 1003 90 1002L205 985C225 985 235 995 240 1020L340 1440C340 1455 325 1455 310 1448L275 1435L180 1452C160 1452 150 1440 146 1420ZM140 1062C150 1050 175 1050 195 1046C215 1050 210 1075 190 1078L155 1082C140 1078 135 1072 140 1062ZM148 1040C120 1045 115 1080 135 1092L158 1096M98 1077H120M148 1145C160 1135 190 1138 210 1132C210 1150 195 1170 185 1185C170 1175 155 1160 148 1145M195 1210L238 1395M158 1382L210 1405M170 1365L212 1382M158 1352L172 1390",
      "M488 1120C485 1105 500 1105 515 1098C535 1080 560 1062 580 1062C600 1080 580 1110 605 1145C625 1175 660 1175 675 1150C700 1135 700 1150 705 1180L755 1320C765 1360 750 1378 715 1370C680 1355 655 1320 640 1310ZM515 1098L670 1275C700 1310 740 1340 752 1355M650 1310L675 1290M700 1320C715 1300 730 1305 745 1310M650 1165L702 1180",
      "M835 1150C845 1140 865 1150 865 1160L830 1215C840 1225 960 1260 990 1270C1000 1280 990 1300 975 1298L800 1235C790 1230 788 1225 795 1215ZM848 1258C860 1260 862 1268 858 1280C870 1290 1000 1330 1020 1345C1025 1360 1010 1375 1000 1368L825 1310C815 1305 815 1295 820 1288Z",
      "M988 1180C1030 1185 1050 1170 1060 1142C1060 1180 1080 1195 1098 1200M988 1180C1025 1195 1035 1215 1030 1248C1040 1215 1060 1205 1090 1202",
      "M0 1300C50 1330 80 1400 72 1470M0 1340L20 1345M0 1385L5 1380M30 1410L45 1415M12 1440L20 1455",
      "M445 1470C475 1410 530 1388 600 1388C660 1392 710 1425 732 1470M480 1470C510 1425 550 1412 600 1412C640 1415 680 1440 695 1470M825 1470C815 1450 820 1440 835 1436L960 1412C980 1410 985 1425 990 1470M880 1470C880 1455 900 1455 905 1470M920 1460C930 1445 945 1450 948 1470",
    ],
  },
];

const Doodles = () => (
  <Wallpaper viewBox="0 0 736 962" preserveAspectRatio="xMinYMin slice" aria-hidden="true">
    {TILES.map((tile) => (
      <g key={`${tile.x}-${tile.y}`} transform={`translate(${tile.x} ${tile.y}) scale(0.33333)`}>
        {tile.dots.map(([cx, cy, r], i) => (
          <circle key={i} cx={cx} cy={cy} r={r} />
        ))}
        <path d={tile.paths.join("")} />
      </g>
    ))}
  </Wallpaper>
);

const BubbleTail = () => (
  <Tail width="14" height="20" viewBox="0 0 14 20" fill="rgba(255,254,253,0.55)" aria-hidden="true">
    <path d="M0 0H11Q14 0 14 3Q14 4 13 5L0 20Z" />
  </Tail>
);

const SelectField = ({ id, label, value }) => (
  <Field>
    <Label htmlFor={id}>{label}</Label>
    <SelectWrap>
      <Select id={id} defaultValue={value}>
        <option>{value}</option>
      </Select>
      <Chevron width="36" height="21" viewBox="0 0 36 21" fill="none" stroke={GREY} strokeWidth="3">
        <path d="M1 1L18 18L35 1" />
      </Chevron>
    </SelectWrap>
  </Field>
);

export default function App() {
  return (
    <Page>
      <GlobalStyle />
      <WindowBar />
      <Header>
        <IconButton aria-label="Filters"><SlidersIcon /></IconButton>
        <IconButton aria-label="Notifications"><BellIcon /></IconButton>
        <IconButton aria-label="Quick notes"><NoteIcon /></IconButton>
        <IconButton aria-label="HubSpot" $fill="#f5f5f5"><HubIcon /></IconButton>
        <IconButton aria-label="Apps"><GridIcon /></IconButton>
        <IconButton aria-label="Account" $size={69} $fill="#3d4eff"><AvatarMark /></IconButton>
      </Header>
      <Body>
        <Conversation>
          <ConversationHeader />
          <Messages>
            <Doodles />
            <Bubble>
              <Bar $width={96} />
              <Bar $width={28} />
            </Bubble>
            <Bubble $sent $gap={60}>
              <Bar $width={197} />
              <BubbleTail />
            </Bubble>
            <Bubble $sent $gap={24}>
              <Bar $width={106} />
              <BubbleTail />
            </Bubble>
            <Bubble $gap={63}>
              <Bar $width={96} />
            </Bubble>
          </Messages>
          <Composer>
            <ComposerBox />
          </Composer>
        </Conversation>
        <Panel>
          <PanelHeader>
            <BackButton aria-label="Back"><BackIcon /></BackButton>
            <Title>Create Task</Title>
          </PanelHeader>
          <Form onSubmit={(e) => e.preventDefault()}>
            <Field>
              <Label htmlFor="description">Task Description</Label>
              <TextInput id="description" type="text" defaultValue="Send Proposal" />
            </Field>
            <SelectField id="assignee" label="Assignee" value="Leslie" />
            <SelectField id="date" label="Due Date" value="In 3 business days (Thursday)" />
            <SelectField id="time" label="Due Time" value="8:00 am" />
            <AttachRow>
              <TextButton type="button" $gap={29}>
                <AttachIcon />
                Attach WhatsApp Messages
              </TextButton>
            </AttachRow>
            <Actions>
              <TextButton type="button" $gap={28} $indent={4} $text={31}>
                <DisclosureIcon />
                Association (1)
              </TextButton>
              <CreateButton type="submit">Create</CreateButton>
            </Actions>
          </Form>
        </Panel>
      </Body>
    </Page>
  );
}
